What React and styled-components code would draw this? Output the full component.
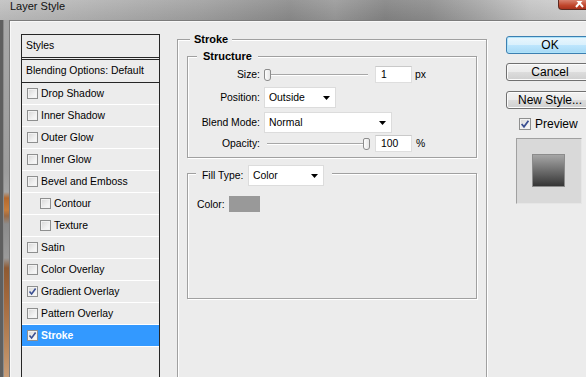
import React from 'react'
import styled, { createGlobalStyle } from 'styled-components'

const GlobalStyle = createGlobalStyle`
  html, body {
    margin: 0;
    padding: 0;
    background: #ececec;
  }
  body {
    font-family: "Liberation Sans", Arial, sans-serif;
    font-size: 10.4px;
    color: #000;
  }
`

const Window = styled.div`
  width: 586px;
  height: 377px;
  overflow: hidden;
  display: flex;
  flex-direction: column;
  background: #ececec;
`

const TitleBar = styled.div`
  flex: none;
  height: 20px;
  display: flex;
  align-items: flex-start;
  background:
    linear-gradient(180deg, rgba(255,255,255,0.08) 0%, rgba(0,0,0,0.06) 100%),
    linear-gradient(90deg, #c2c2c2 0px, #b4b4b4 90px, #a2a2a2 200px, #8d8d8d 290px, #9b9b9b 335px, #868686 385px, #8f8f8f 430px, #a9a9a9 480px, #c6c6c6 530px, #d2d2d2 586px);
`

const Title = styled.span`
  margin-left: 10px;
  font-size: 11px;
  line-height: 12px;
  color: #111;
`

const CloseButton = styled.span`
  margin-left: auto;
  margin-right: -16px;
  width: 44px;
  height: 10px;
  box-sizing: border-box;
  border: 1px solid #5d2a20;
  border-top: none;
  border-radius: 0 0 4px 4px;
  background: linear-gradient(180deg, #d8826f 0%, #c0462c 60%, #a8321c 100%);
  display: flex;
  justify-content: center;
  align-items: flex-end;
  overflow: hidden;
`

const Body = styled.div`
  flex: 1;
  display: flex;
  min-height: 0;
`

const FrameEdge = styled.div`
  flex: none;
  width: 9px;
  box-shadow: inset 3px 0 0 #5f5f5f, inset 4px 0 0 #8a8a8a;
  background: linear-gradient(180deg, #a8a8a8 0px, #9c9c9c 150px, #a4a4a4 172px, #b4692e 178px, #c67d3c 190px, #9b6a45 196px, #8c8c8c 204px, #9a9a9a 238px, #8e5a33 248px, #a3693d 280px, #bb8a5f 330px, #c89d78 357px);
`

const Client = styled.div`
  flex: 1;
  display: flex;
  align-items: flex-start;
  border-top: 1px solid #7c7c7c;
  border-left: 1px solid #7c7c7c;
  box-shadow: inset 1px 1px 0 #f8f8f8;
  background: #ececec;
`

const StylesList = styled.div`
  flex: none;
  width: 139px;
  height: 400px;
  box-sizing: border-box;
  margin: 13px 0 0 11px;
  border: 1px solid #262626;
  background: #ececec;
`

const ListHeader = styled.div`
  height: 22px;
  line-height: 22px;
  padding-left: 4px;
  border-bottom: 1px solid #262626;
  margin-bottom: 1px;
`

const BlendingRow = styled.div`
  height: 22px;
  line-height: 22px;
  padding-left: 4px;
  border-top: 1px solid #262626;
  border-bottom: 1px solid #262626;
`

const StyleRow = styled.div`
  height: 21px;
  display: flex;
  align-items: center;
  gap: 3px;
  padding-left: ${p => (p.$indent ? 18 : 5)}px;
  border-bottom: 1px solid #fff;
  background: ${p => (p.$selected ? '#3399ff' : 'transparent')};
  color: ${p => (p.$selected ? '#fff' : '#000')};
  font-weight: ${p => (p.$selected ? 'bold' : 'normal')};
`

const Box = styled.span`
  flex: none;
  width: ${p => p.$size}px;
  height: ${p => p.$size}px;
  box-sizing: border-box;
  border: 1px solid #8e8f8f;
  background: linear-gradient(135deg, #d6d6d6 0%, #f0f0f0 60%, #fbfbfb 100%);
  box-shadow: inset 0 0 0 1px #f2f2f2;
  display: flex;
  align-items: center;
  justify-content: center;
`

const Checkbox = ({ checked, size = 11 }) => (
  <Box $size={size}>
    {checked && (
      <svg width={size - 2} height={size - 2} viewBox="0 0 9 9">
        <path d="M1.5 4.5 L3.6 7 L7.6 1.6" fill="none" stroke="#3a4f92" strokeWidth="1.6" />
      </svg>
    )}
  </Box>
)

const MainPanel = styled.div`
  flex: none;
  width: 310px;
  margin: 18px 0 0 17px;
`

const Group = styled.div`
  box-sizing: border-box;
  border: 1px solid #a0a0a0;
  box-shadow: 1px 1px 0 #fff, inset 1px 1px 0 #fff;
  height: ${p => (p.$height ? `${p.$height}px` : 'auto')};
  margin: ${p => p.$margin || '0'};
  padding-bottom: ${p => p.$padBottom || 0}px;
`

const Legend = styled.div`
  width: fit-content;
  display: flex;
  align-items: center;
  height: ${p => p.$height || 13}px;
  line-height: ${p => p.$height || 13}px;
  margin: ${p => p.$top || -7}px 0 0 ${p => p.$left}px;
  padding: ${p => p.$pad || '0 4px'};
  background: #ececec;
  font-weight: ${p => (p.$bold ? 'bold' : 'normal')};
  font-size: ${p => (p.$bold ? '11px' : 'inherit')};
`

const Field = styled.div`
  display: flex;
  align-items: center;
  height: ${p => p.$height}px;
  margin-top: ${p => p.$top}px;
`

const Label = styled.span`
  flex: none;
  width: ${p => p.$width || 72}px;
  margin-right: 4px;
  text-align: ${p => p.$align || 'right'};
`

const Slider = styled.div`
  position: relative;
  flex: none;
  width: 108px;
  height: 12px;
`

const Track = styled.div`
  margin: 5px 4px 0 3px;
  height: 0;
  border-top: 1px solid #a7a7a7;
  border-bottom: 1px solid #fff;
`

const Thumb = styled.span`
  position: absolute;
  top: 0;
  width: 7px;
  height: 12px;
  box-sizing: border-box;
  border: 1px solid #8c8c8c;
  border-radius: 2px 2px 3px 3px;
  background: linear-gradient(90deg, #fdfdfd 0%, #e6e6e6 100%);
`

const TextBox = styled.div`
  flex: none;
  width: 37px;
  height: 17px;
  box-sizing: border-box;
  margin-left: 3px;
  padding-left: 5px;
  line-height: 15px;
  background: #fff;
  border: 1px solid #dedede;
  border-top-color: #c9c9c9;
`

const Unit = styled.span`
  margin-left: ${p => p.$gap || 3}px;
`

const SelectBox = styled.div`
  flex: none;
  width: ${p => p.$width}px;
  height: 21px;
  box-sizing: border-box;
  display: flex;
  align-items: center;
  justify-content: space-between;
  padding: 0 5px 0 4px;
  background: #fff;
  border: 1px solid #dcdcdc;
  font-weight: normal;
`

const Select = ({ value, width }) => (
  <SelectBox $width={width}>
    <span>{value}</span>
    <svg width="7" height="4" viewBox="0 0 7 4">
      <polygon points="0,0 7,0 3.5,4" fill="#000" />
    </svg>
  </SelectBox>
)

const Swatch = styled.span`
  flex: none;
  width: 31px;
  height: 16px;
  background: #999999;
`

const ColorRow = styled.div`
  display: flex;
  align-items: center;
  height: 16px;
  margin: 10px 0 0 9px;
`

const RightPanel = styled.div`
  flex: none;
  display: flex;
  flex-direction: column;
  align-items: flex-start;
  margin: 15px 0 0 19px;
`

const Button = styled.div`
  flex: none;
  width: 88px;
  height: 18px;
  box-sizing: border-box;
  margin-bottom: ${p => p.$gap || 0}px;
  border: 1px solid ${p => (p.$default ? '#3c7fb1' : '#707070')};
  border-radius: 3px;
  background: ${p =>
    p.$default
      ? 'linear-gradient(180deg, #eaf6fd 0%, #d9f0fc 50%, #bee6fd 50%, #a7d9f5 100%)'
      : 'linear-gradient(180deg, #f2f2f2 0%, #ebebeb 50%, #dddddd 50%, #cfcfcf 100%)'};
  box-shadow: inset 0 0 0 1px ${p => (p.$default ? '#aee3f9' : '#fbfbfb')};
  font-size: 12px;
  line-height: 16px;
  text-align: center;
  color: #000;
`

const PreviewToggle = styled.div`
  display: flex;
  align-items: center;
  gap: 4px;
  margin: 9px 0 0 13px;
  font-size: 12px;
  line-height: 12px;
`

const PreviewBox = styled.div`
  width: 66px;
  height: 66px;
  box-sizing: border-box;
  margin: 8px 0 0 10px;
  padding-top: 15px;
  background: #d9d9d9;
  border: 1px solid #e6e6e6;
  border-top-color: #a0a0a0;
  border-left-color: #a0a0a0;
`

const PreviewSwatch = styled.div`
  width: 33px;
  height: 33px;
  box-sizing: border-box;
  margin-left: 15px;
  border: 1px solid #8c8c8c;
  background: linear-gradient(180deg, #a6a6a6 0%, #6e6e6e 50%, #353535 100%);
`

const effects = [
  { name: 'Drop Shadow' },
  { name: 'Inner Shadow' },
  { name: 'Outer Glow' },
  { name: 'Inner Glow' },
  { name: 'Bevel and Emboss' },
  { name: 'Contour', indent: true },
  { name: 'Texture', indent: true },
  { name: 'Satin' },
  { name: 'Color Overlay' },
  { name: 'Gradient Overlay', checked: true },
  { name: 'Pattern Overlay' },
  { name: 'Stroke', checked: true, selected: true },
]

const App = () => (
  <Window>
    <GlobalStyle />
    <TitleBar>
      <Title>Layer Style</Title>
      <CloseButton>
        <svg width="10" height="8" viewBox="0 0 10 8">
          <path d="M1 -2 L8 6 M8 -2 L1 6" stroke="#fff" strokeWidth="2" />
        </svg>
      </CloseButton>
    </TitleBar>
    <Body>
      <FrameEdge />
      <Client>
        <StylesList>
          <ListHeader>Styles</ListHeader>
          <BlendingRow>Blending Options: Default</BlendingRow>
          {effects.map(item => (
            <StyleRow key={item.name} $indent={item.indent} $selected={item.selected}>
              <Checkbox checked={item.checked} />
              <span>{item.name}</span>
            </StyleRow>
          ))}
        </StylesList>

        <MainPanel>
          <Group $height={400}>
            <Legend $left={12} $bold>Stroke</Legend>
            <Group $margin="10px 9px 0" $padBottom={5}>
              <Legend $left={9} $pad="0 6px" $bold>Structure</Legend>
              <Field $height={17} $top={3}>
                <Label>Size:</Label>
                <Slider>
                  <Track />
                  <Thumb style={{ left: 0 }} />
                </Slider>
                <TextBox>1</TextBox>
                <Unit>px</Unit>
              </Field>
              <Field $height={21} $top={4}>
                <Label>Position:</Label>
                <Select value="Outside" width={72} />
              </Field>
              <Field $height={21} $top={4}>
                <Label>Blend Mode:</Label>
                <Select value="Normal" width={128} />
              </Field>
              <Field $height={17} $top={2}>
                <Label>Opacity:</Label>
                <Slider>
                  <Track />
                  <Thumb style={{ left: 99 }} />
                </Slider>
                <TextBox>100</TextBox>
                <Unit $gap={4}>%</Unit>
              </Field>
            </Group>
            <Group $margin="15px 9px 0" $height={126}>
              <Legend $left={8} $top={-9} $height={21} $pad="0 8px 0 6px">
                <Label $width={42} $align="left">Fill Type:</Label>
                <Select value="Color" width={76} />
              </Legend>
              <ColorRow>
                <Label $width={28} $align="left">Color:</Label>
                <Swatch />
              </ColorRow>
            </Group>
          </Group>
        </MainPanel>

        <RightPanel>
          <Button $default $gap={9}>OK</Button>
          <Button $gap={10}>Cancel</Button>
          <Button>New Style...</Button>
          <PreviewToggle>
            <Checkbox checked size={12} />
            <span>Preview</span>
          </PreviewToggle>
          <PreviewBox>
            <PreviewSwatch />
          </PreviewBox>
        </RightPanel>
      </Client>
    </Body>
  </Window>
)

export default App
